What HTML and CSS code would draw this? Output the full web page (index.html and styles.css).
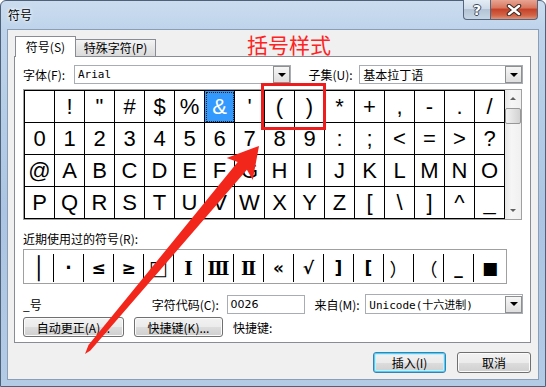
FILE: index.html
```html
<!DOCTYPE html>
<html lang="zh-CN">
<head>
    <meta charset="UTF-8">
    <title>符号</title>
    <link rel="stylesheet" href="styles.css">
</head>
<body>
<div class="window">
    <div class="titlebar">
        <span class="title">符号</span>
        <div class="caption">
            <span class="cap-btn help">?</span>
            <span class="cap-btn close">
                <svg width="16" height="12" viewBox="0 0 16 12">
                    <path d="M3 2 L13 10 M13 2 L3 10" stroke="#3b2a26" stroke-width="4.5" stroke-linecap="round"/>
                    <path d="M3 2 L13 10 M13 2 L3 10" stroke="#fff" stroke-width="2.4" stroke-linecap="round"/>
                </svg>
            </span>
        </div>
    </div>

    <div class="client">
        <div class="tabs">
            <div class="tab active">符号(<u>S</u>)</div>
            <div class="tab">特殊字符(<u>P</u>)</div>
        </div>

        <div class="panel">
            <div class="row font-row">
                <span class="lbl">字体(<u>F</u>):</span>
                <div class="combo font-combo"><span class="mono">Arial</span><span class="drop"></span></div>
                <span class="lbl subset-lbl">子集(<u>U</u>):</span>
                <div class="combo subset-combo"><span>基本拉丁语</span><span class="drop"></span></div>
            </div>

            <div class="charmap">
                <div class="chars">
                    <span></span><span>!</span><span>"</span><span>#</span><span>$</span><span>%</span><span class="sel">&amp;</span><span>'</span>
                    <span>(</span><span>)</span><span>*</span><span>+</span><span>,</span><span>-</span><span>.</span><span>/</span>
                    <span>0</span><span>1</span><span>2</span><span>3</span><span>4</span><span>5</span><span>6</span><span>7</span>
                    <span>8</span><span>9</span><span>:</span><span>;</span><span>&lt;</span><span>=</span><span>&gt;</span><span>?</span>
                    <span>@</span><span>A</span><span>B</span><span>C</span><span>D</span><span>E</span><span>F</span><span>G</span>
                    <span>H</span><span>I</span><span>J</span><span>K</span><span>L</span><span>M</span><span>N</span><span>O</span>
                    <span>P</span><span>Q</span><span>R</span><span>S</span><span>T</span><span>U</span><span>V</span><span>W</span>
                    <span>X</span><span>Y</span><span>Z</span><span>[</span><span>\</span><span>]</span><span>^</span><span>_</span>
                </div>
                <div class="vscroll">
                    <span class="sb-arrow up"></span>
                    <span class="thumb"></span>
                    <span class="sb-track"></span>
                    <span class="sb-arrow down"></span>
                </div>
            </div>

            <div class="recent-lbl">近期使用过的符号(<u>R</u>):</div>
            <div class="recent">
                <span class="bar">│</span><span>·</span><span>≤</span><span>≥</span><span class="box">□</span><span class="roman">Ⅰ</span><span class="roman">Ⅲ</span><span class="roman">Ⅱ</span>
                <span>«</span><span>√</span><span>]</span><span>[</span><span class="thin">）</span><span class="thin">（</span><span>_</span><span>■</span>
            </div>

            <div class="row info-row">
                <span class="name-lbl">_号</span>
                <span class="code-lbl">字符代码(<u>C</u>):</span>
                <div class="code-input">0026</div>
                <span class="from-lbl">来自(<u>M</u>):</span>
                <div class="combo from-combo"><span class="mono">Unicode(十六进制)</span><span class="drop"></span></div>
            </div>

            <div class="row btn-row">
                <button class="btn btn-auto">自动更正(<u>A</u>)...</button>
                <button class="btn btn-key">快捷键(<u>K</u>)...</button>
                <span class="key-lbl">快捷键:</span>
            </div>
        </div>

        <div class="actions">
            <button class="btn btn-insert">插入(<u>I</u>)</button>
            <button class="btn btn-cancel">取消</button>
        </div>
    </div>

    <!-- annotation drawn over the dialog -->
    <div class="note">括号样式</div>
    <div class="note-box"></div>
    <svg class="arrow" width="546" height="387" viewBox="0 0 546 387">
        <polygon points="259,146 252.7,179.9 246.9,169.8 90.4,350.6 85,354 88.5,345.1 237.7,162 226.7,158.1" fill="#f3261c"/>
    </svg>
</div>
</body>
</html>
```

FILE: styles.css
```css
* {
    box-sizing: border-box;
}
body {
    margin: 0;
    width: 546px;
    height: 387px;
    overflow: hidden;
    font-family: "Noto Sans CJK SC", sans-serif;
    font-size: 12px;
    color: #000;
    background: #fff;
}
u {
    text-decoration: none;
}
.window {
    position: relative;
    width: 546px;
    height: 387px;
    border: 1px solid #4f6179;
    border-radius: 6px 6px 0 0;
    background: linear-gradient(to bottom, #cbdcef 0, #bfd4eb 28px, #abc5e2 55%, #b4cbe6 100%);
    padding: 0 6px 6px;
    display: flex;
    flex-direction: column;
}
.titlebar {
    height: 28px;
    display: flex;
    align-items: flex-start;
}
.title {
    padding: 6px 0 0 1px;
    line-height: 16px;
    text-shadow: 0 0 5px #fff, 0 0 3px #fff;
}
.caption {
    margin-left: auto;
    margin-right: 1px;
    margin-top: -1px;
    display: flex;
}
.cap-btn {
    height: 20px;
    display: flex;
    align-items: center;
    justify-content: center;
    border: 1px solid #55657c;
    border-top: none;
}
.help {
    width: 28px;
    border-radius: 0 0 0 4px;
    background: linear-gradient(to bottom, #e4ecf5 0, #cfdbe8 45%, #b4c3d5 50%, #c7d6e6 100%);
    color: #fff;
    font-family: "DejaVu Sans", sans-serif;
    font-weight: bold;
    font-size: 14px;
    text-shadow: -1px 0 #3b4a5e, 1px 0 #3b4a5e, 0 -1px #3b4a5e, 0 1px #3b4a5e;
}
.close {
    width: 47px;
    border-left: none;
    border-radius: 0 0 4px 0;
    background: linear-gradient(to bottom, #e7a593 0, #d8785f 40%, #c6432a 50%, #d26346 80%, #e0937a 100%);
}
.client {
    flex: 1;
    border: 1px solid #8a9eb8;
    background: #f0f0f0;
    padding: 6px 7px 0 6px;
}
.tabs {
    height: 20px;
    display: flex;
    align-items: flex-end;
    padding-left: 1px;
}
.tab {
    height: 17px;
    width: 81px;
    margin-left: -1px;
    border: 1px solid #898c95;
    border-bottom: none;
    background: linear-gradient(to bottom, #f4f4f4, #e6e6e6 50%, #dadada);
    line-height: 16px;
    text-align: center;
}
.tab.active {
    position: relative;
    z-index: 1;
    width: 61px;
    height: 21px;
    margin: 0 0 -1px 0;
    background: #fff;
    line-height: 20px;
}
.panel {
    height: 287px;
    border: 1px solid #898c95;
    background: #fff;
    padding: 8px 7px 5px 8px;
}
.row {
    display: flex;
    align-items: center;
}
.font-row {
    height: 19px;
}
.lbl {
    width: 51px;
    white-space: nowrap;
}
.subset-lbl {
    margin-left: 17px;
}
.combo {
    height: 19px;
    border: 1px solid #a8acb3;
    background: #fff;
    display: flex;
    align-items: center;
    padding-left: 3px;
}
.font-combo {
    width: 218px;
}
.subset-combo {
    width: 164px;
}
.mono {
    font-family: "DejaVu Sans Mono", "Noto Sans CJK SC", monospace;
    font-size: 11px;
}
.drop {
    margin-left: auto;
    width: 17px;
    height: 17px;
    border: 1px solid #8e8f8f;
    background: linear-gradient(to bottom, #f6f6f6, #dedede);
    display: flex;
    align-items: center;
    justify-content: center;
}
.drop::after {
    content: "";
    border-left: 4px solid transparent;
    border-right: 4px solid transparent;
    border-top: 4px solid #000;
}
.charmap {
    margin-top: 5px;
    width: 499px;
    display: flex;
    border: 1px solid #a0a0a0;
}
.chars {
    display: grid;
    grid-template-columns: repeat(16, 30px);
    width: 481px;
    border-top: 1px solid #000;
    border-left: 1px solid #000;
}
.chars span {
    height: 32px;
    border-right: 1px solid #000;
    border-bottom: 1px solid #000;
    display: flex;
    align-items: center;
    justify-content: center;
    font-family: "Liberation Sans", Arial, sans-serif;
    font-size: 22px;
}
.chars .sel {
    background: #3399ff;
    color: #fff;
    outline: 1px dotted #222;
    outline-offset: -2px;
}
.vscroll {
    width: 16px;
    display: flex;
    flex-direction: column;
    background: linear-gradient(to right, #e6e6e6, #f6f6f6 40%, #f0f0f0);
}
.sb-arrow {
    height: 17px;
    display: flex;
    align-items: center;
    justify-content: center;
}
.sb-arrow::after {
    content: "";
    border-left: 3px solid transparent;
    border-right: 3px solid transparent;
}
.up::after {
    border-bottom: 3px solid #606060;
}
.down::after {
    border-top: 3px solid #606060;
}
.thumb {
    height: 16px;
    margin: 1px 0 0 0;
    border: 1px solid #979797;
    border-radius: 2px;
    background: linear-gradient(to right, #f2f2f2, #e2e2e2 50%, #d2d2d2);
}
.sb-track {
    flex: 1;
}
.recent-lbl {
    margin-top: 12px;
    line-height: 14px;
}
.recent {
    margin-top: 3px;
    width: 484px;
    height: 35px;
    border: 1px solid #a0a0a0;
    padding: 4px 0 1px;
    display: flex;
}
.recent span {
    flex: 0 0 30px;
    border-right: 1px solid #000;
    display: flex;
    align-items: center;
    justify-content: center;
    font-family: "DejaVu Sans", "Noto Sans CJK SC", sans-serif;
    font-size: 17px;
    font-weight: bold;
}
.recent span:last-child {
    flex: 1;
    border-right: none;
}
.recent .bar {
    font-size: 22px;
}
.recent .box {
    font-weight: normal;
    font-size: 20px;
}
.recent .roman {
    font-family: "DejaVu Serif", "Liberation Serif", serif;
    font-size: 18px;
}
.recent .thin {
    font-weight: normal;
    font-size: 18px;
}
.info-row {
    margin-top: 10px;
    height: 20px;
}
.name-lbl {
    width: 129px;
}
.code-lbl {
    width: 75px;
    white-space: nowrap;
}
.code-input {
    width: 79px;
    height: 19px;
    border: 1px solid #a8acb3;
    background: #fff;
    padding-left: 3px;
    font-family: "DejaVu Sans", sans-serif;
    font-size: 11px;
    line-height: 17px;
}
.from-lbl {
    margin-left: 9px;
    width: 51px;
    white-space: nowrap;
}
.from-combo {
    width: 158px;
    height: 20px;
}
.btn-row {
    margin-top: 3px;
    height: 20px;
}
.btn {
    height: 20px;
    padding: 0;
    border: 1px solid #707070;
    border-radius: 3px;
    background: linear-gradient(to bottom, #f2f2f2 0, #ebebeb 50%, #dddddd 50%, #cfcfcf 100%);
    box-shadow: inset 0 0 0 1px #fbfbfb;
    font-family: "Noto Sans CJK SC", sans-serif;
    font-size: 12px;
    color: #000;
}
.btn-auto {
    width: 101px;
}
.btn-key {
    width: 89px;
    margin-left: 10px;
}
.key-lbl {
    margin-left: 10px;
}
.actions {
    display: flex;
    justify-content: flex-end;
    gap: 11px;
    margin-top: 9px;
}
.actions .btn {
    height: 21px;
}
.btn-insert {
    width: 73px;
    border-color: #3c7fb1;
    box-shadow: inset 0 0 0 1px #48d2f8, inset 0 0 0 2px #c4ecfb;
}
.btn-cancel {
    width: 74px;
}
.note {
    position: absolute;
    left: 246px;
    top: 31px;
    font-size: 21px;
    line-height: 24px;
    color: #ff2222;
}
.note-box {
    position: absolute;
    left: 260px;
    top: 82px;
    width: 65px;
    height: 47px;
    border: 3px solid #ee1d1d;
}
.arrow {
    position: absolute;
    left: -1px;
    top: -1px;
    pointer-events: none;
}
```
